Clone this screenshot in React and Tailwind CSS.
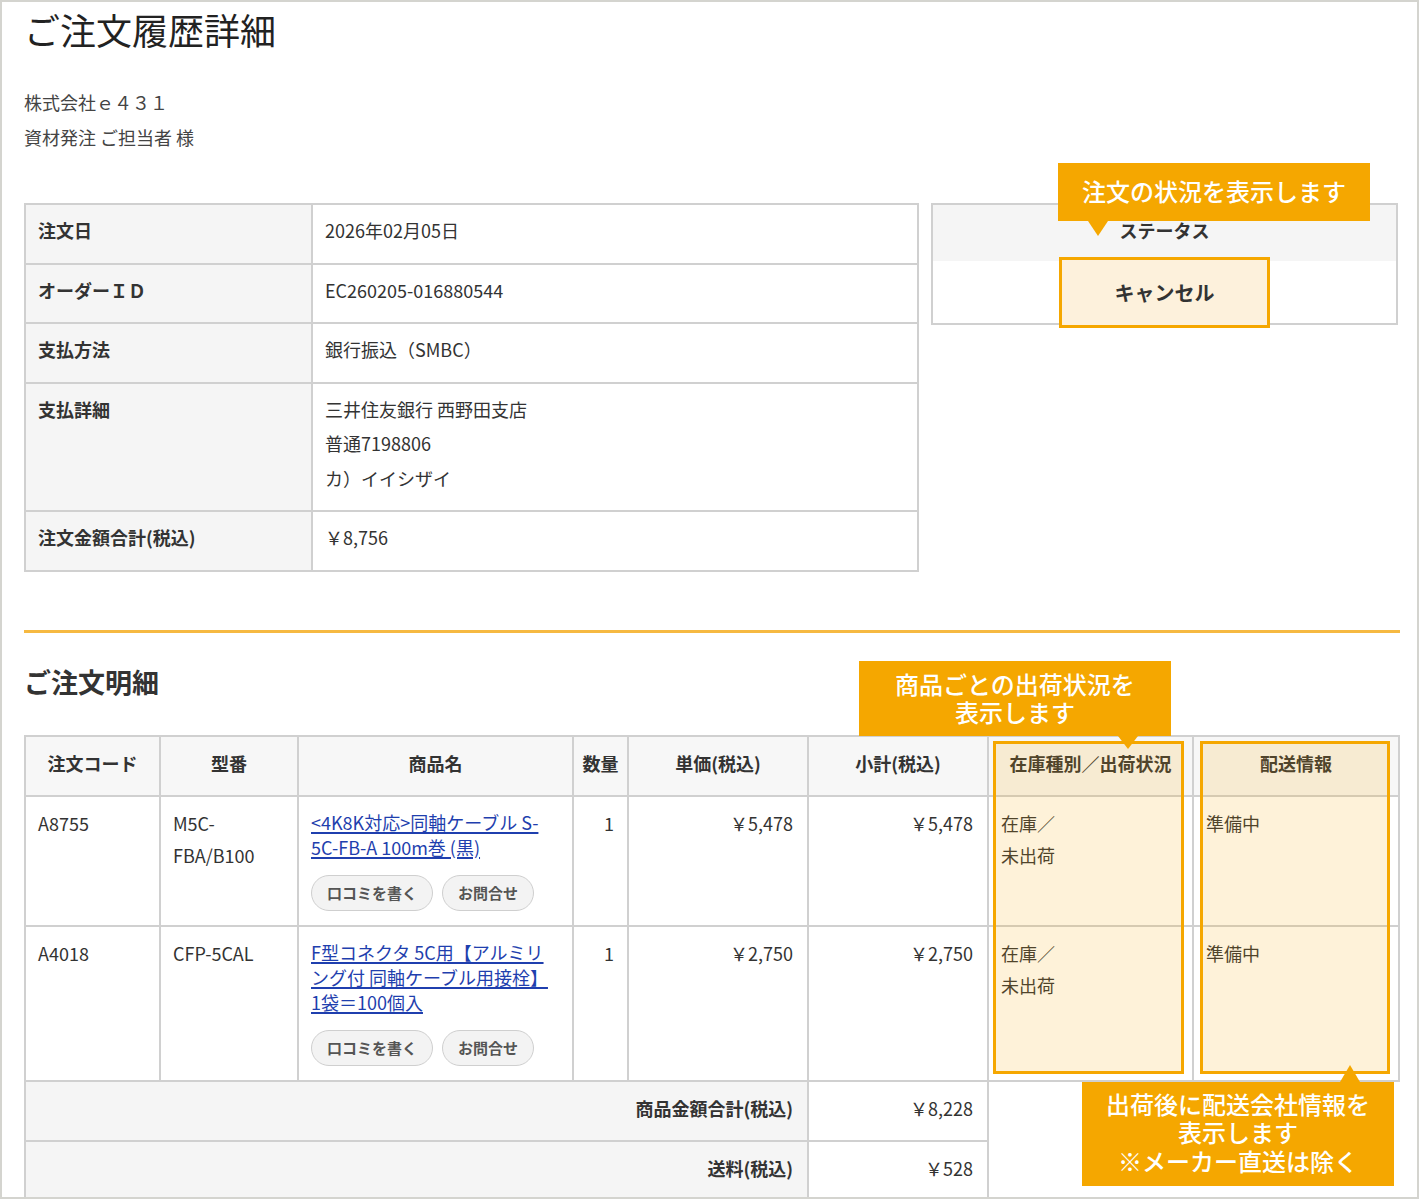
import React from "react";

// order detail page: summary table, status box and line items

const infoRows = [
    { label: "注文日", value: ["2026年02月05日"] },
    { label: "オーダーＩＤ", value: ["EC260205-016880544"] },
    { label: "支払方法", value: ["銀行振込（SMBC）"] },
    { label: "支払詳細", value: ["三井住友銀行 西野田支店", "普通7198806", "カ）イイシザイ"] },
    { label: "注文金額合計(税込)", value: ["￥8,756"] },
];

const items = [
    {
        code: "A8755",
        model: ["M5C-", "FBA/B100"],
        name: ["<4K8K対応>同軸ケーブル S-", "5C-FB-A 100m巻 (黒)"],
        qty: 1,
        price: "￥5,478",
        subtotal: "￥5,478",
    },
    {
        code: "A4018",
        model: ["CFP-5CAL"],
        name: ["F型コネクタ 5C用【アルミリ", "ング付 同軸ケーブル用接栓】", "1袋＝100個入"],
        qty: 1,
        price: "￥2,750",
        subtotal: "￥2,750",
    },
];

const cell = "border-2 border-[#d0d0d0]";

function Callout({ className, children }) {
    return (
        <div
            className={
                "absolute z-20 w-[312px] bg-[#f5a700] text-center text-[24px] font-medium text-white " +
                className
            }
        >
            {children}
        </div>
    );
}

function PillButton({ children }) {
    return (
        <span className="inline-flex h-9 items-center rounded-full border-[1.5px] border-[#cfcfcf] bg-[#f3f3f3] px-[15px] text-[15px] font-bold text-[#555]">
            {children}
        </span>
    );
}

export default function App() {
    return (
        <div className="h-[1199px] w-[1419px] overflow-hidden border-2 border-[#d4d4cf] bg-white font-['Noto_Sans_CJK_JP',sans-serif] text-[#333]">
            <div className="pl-[22px] pr-[19px]">
                <h1 className="mt-[6px] text-[36px] font-normal leading-[43px] text-[#222]">
                    ご注文履歴詳細
                </h1>

                <div className="mt-[34px] text-[18px] leading-[35px] text-[#444]">
                    <p>株式会社ｅ４３１</p>
                    <p>資材発注 ご担当者 様</p>
                </div>

                {/* order summary + status */}
                <div className="mt-[48px] flex items-start gap-[12px]">
                    <table className="w-[893px] table-fixed border-collapse text-[18px]">
                        <colgroup>
                            <col className="w-[287px]" />
                            <col className="w-[606px]" />
                        </colgroup>
                        <tbody>
                            {infoRows.map((row) => (
                                <tr key={row.label}>
                                    <th className={`${cell} bg-[#f5f5f5] px-3 pt-[8px] pb-[15px] text-left align-top font-bold leading-[34.5px]`}>
                                        {row.label}
                                    </th>
                                    <td className={`${cell} px-3 pt-[8px] pb-[15px] align-top leading-[34.5px]`}>
                                        {row.value.map((v) => (
                                            <div key={v}>{v}</div>
                                        ))}
                                    </td>
                                </tr>
                            ))}
                        </tbody>
                    </table>

                    <div className="relative w-[468px] border-2 border-[#d0d0d0] text-[18px]">
                        <div className="bg-[#f5f5f5] pt-[8px] pb-[14px] text-center font-bold leading-[34px]">
                            ステータス
                        </div>
                        <div className="flex h-[62px] justify-center">
                            <div className="relative z-10 -mt-[4px] flex h-[71px] w-[211px] items-center justify-center border-[3px] border-[#f5a700] bg-[#fdf1dc] text-[20px] font-bold">
                                キャンセル
                            </div>
                        </div>

                        <Callout className="-top-[42px] left-[125px] pt-[14px] pb-[16px] leading-[28px]">
                            注文の状況を表示します
                            <span className="absolute top-full left-[30px] h-0 w-0 border-x-[10px] border-t-[15px] border-x-transparent border-t-[#f5a700]" />
                        </Callout>
                    </div>
                </div>

                <div className="mt-[58px] h-[3px] w-[1376px] bg-[#f6b941]" />

                <h2 className="mt-[30px] text-[27px] font-bold leading-[38px]">ご注文明細</h2>

                {/* line items */}
                <div className="relative mt-[34px] w-[1374px]">
                    <table className="w-[1374px] table-fixed border-collapse text-[18px]">
                        <colgroup>
                            <col className="w-[135px]" />
                            <col className="w-[138px]" />
                            <col className="w-[275px]" />
                            <col className="w-[55px]" />
                            <col className="w-[180px]" />
                            <col className="w-[180px]" />
                            <col className="w-[205px]" />
                            <col className="w-[206px]" />
                        </colgroup>
                        <thead>
                            <tr className="bg-[#f7f7f7]">
                                {["注文コード", "型番", "商品名", "数量", "単価(税込)", "小計(税込)", "在庫種別／出荷状況", "配送情報"].map((h) => (
                                    <th key={h} className={`${cell} px-1 pt-[10px] pb-[16px] text-center font-bold leading-8 whitespace-nowrap`}>
                                        {h}
                                    </th>
                                ))}
                            </tr>
                        </thead>
                        <tbody>
                            {items.map((it) => (
                                <tr key={it.code} className="align-top">
                                    <td className={`${cell} px-3 pt-[10px] leading-8`}>{it.code}</td>
                                    <td className={`${cell} px-3 pt-[10px] leading-8`}>
                                        {it.model.map((m) => (
                                            <div key={m}>{m}</div>
                                        ))}
                                    </td>
                                    <td className={`${cell} px-3 pt-[13px] pb-[14px]`}>
                                        <div className="leading-[25px]">
                                            <a href="#" className="text-[#1f3fae] underline decoration-[1.5px] underline-offset-2">
                                                {it.name.map((n, i) => (
                                                    <React.Fragment key={n}>
                                                        {i > 0 && <br />}
                                                        {n}
                                                    </React.Fragment>
                                                ))}
                                            </a>
                                        </div>
                                        <div className="mt-[15px] flex gap-[9px] leading-none">
                                            <PillButton>口コミを書く</PillButton>
                                            <PillButton>お問合せ</PillButton>
                                        </div>
                                    </td>
                                    <td className={`${cell} pr-[13px] pt-[10px] text-right leading-8`}>{it.qty}</td>
                                    <td className={`${cell} pr-[14px] pt-[10px] text-right leading-8`}>{it.price}</td>
                                    <td className={`${cell} pr-[14px] pt-[10px] text-right leading-8`}>{it.subtotal}</td>
                                    <td className={`${cell} px-3 pt-[10px] leading-8`}>
                                        在庫／
                                        <br />
                                        未出荷
                                    </td>
                                    <td className={`${cell} px-3 pt-[10px] leading-8`}>準備中</td>
                                </tr>
                            ))}
                            <tr>
                                <td colSpan={5} className={`${cell} bg-[#f5f5f5] pr-[14px] pt-[10px] pb-[16px] text-right font-bold leading-8`}>
                                    商品金額合計(税込)
                                </td>
                                <td className={`${cell} pr-[14px] pt-[10px] pb-[16px] text-right leading-8`}>￥8,228</td>
                                <td colSpan={2} rowSpan={2} className="border-t-2 border-l-2 border-[#d0d0d0]" />
                            </tr>
                            <tr>
                                <td colSpan={5} className={`${cell} bg-[#f5f5f5] pr-[14px] pt-[10px] pb-[16px] text-right font-bold leading-8`}>
                                    送料(税込)
                                </td>
                                <td className={`${cell} pr-[14px] pt-[10px] pb-[16px] text-right leading-8`}>￥528</td>
                            </tr>
                        </tbody>
                    </table>

                    {/* column highlights */}
                    <div className="pointer-events-none absolute top-[6px] left-[969px] z-10 h-[333px] w-[191px] border-[3px] border-[#f5a700] bg-[#f5a700]/15" />
                    <div className="pointer-events-none absolute top-[6px] left-[1176px] z-10 h-[333px] w-[190px] border-[3px] border-[#f5a700] bg-[#f5a700]/15" />

                    <Callout className="-top-[74px] left-[835px] pt-[9px] pb-[10px] leading-[28px]">
                        商品ごとの出荷状況を
                        <br />
                        表示します
                        <span className="absolute top-full left-[259px] h-0 w-0 border-x-[10px] border-t-[13px] border-x-transparent border-t-[#f5a700]" />
                    </Callout>

                    <Callout className="top-[347px] left-[1058px] pt-[8px] pb-[11px] leading-[28.5px]">
                        <span className="absolute bottom-full left-[258px] h-0 w-0 border-x-[10px] border-b-[17px] border-x-transparent border-b-[#f5a700]" />
                        出荷後に配送会社情報を
                        <br />
                        表示します
                        <br />
                        ※メーカー直送は除く
                    </Callout>
                </div>
            </div>
        </div>
    );
}
